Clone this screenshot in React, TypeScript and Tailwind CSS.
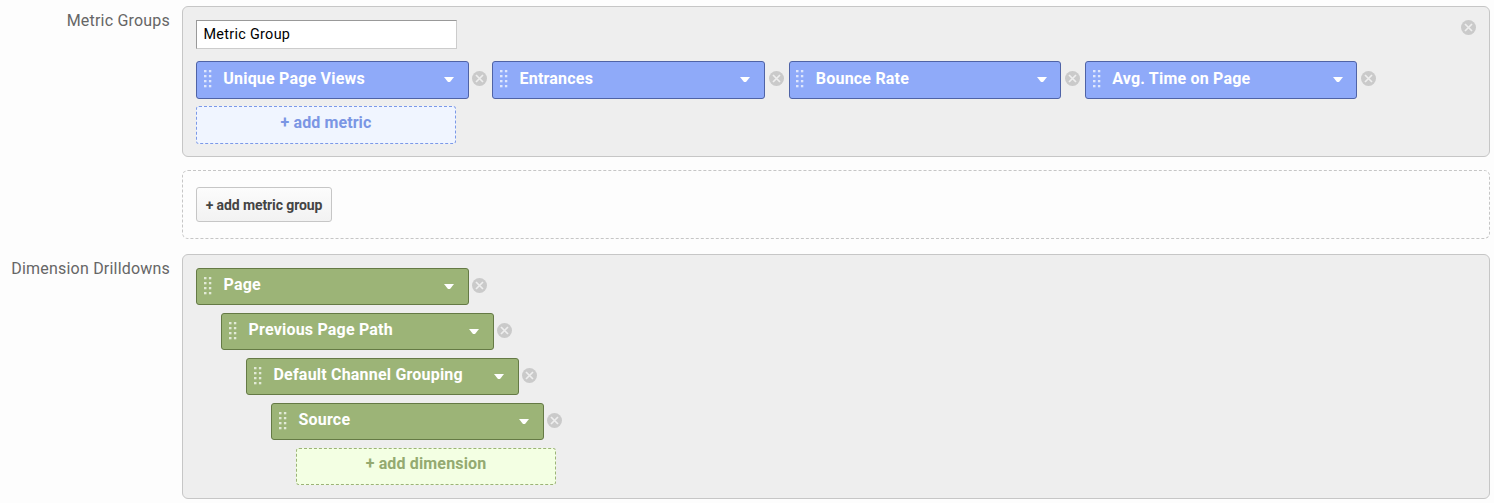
import React from "react";

const METRICS = ["Unique Page Views", "Entrances", "Bounce Rate", "Avg. Time on Page"];

const DIMENSIONS = [
  { name: "Page", indent: "pl-0" },
  { name: "Previous Page Path", indent: "pl-[25px]" },
  { name: "Default Channel Grouping", indent: "pl-[50px]" },
  { name: "Source", indent: "pl-[75px]" },
];

function RemoveIcon() {
  return (
    <svg width="15" height="15" viewBox="0 0 15 15" className="block shrink-0">
      <circle cx="7.5" cy="7.5" r="7.5" fill="#cacaca" />
      <path d="M4 4l7 7M11 4l-7 7" stroke="#eeeeee" strokeWidth="1.7" />
    </svg>
  );
}

function Grip() {
  return (
    <svg width="8" height="18" viewBox="0 0 8 18" className="block shrink-0" fill="#fff" fillOpacity="0.7">
      {[0, 5, 10, 15].map((y) => (
        <g key={y}>
          <rect x="0" y={y} width="2.5" height="2.3" />
          <rect x="4.9" y={y} width="2.4" height="2.3" />
        </g>
      ))}
    </svg>
  );
}

function Chip({ label, kind }: { label: string; kind: "metric" | "dimension" }) {
  const look =
    kind === "metric"
      ? "h-[38px] w-[272.55px] pr-[13.6px] pl-[6.8px] bg-[#8faaf9] border-[#4f63a6]"
      : "h-[37px] w-[273px] pr-[14px] pl-[7px] bg-[#9cb477] border-[#657a45]";
  const gap = kind === "metric" ? "gap-[3.7px]" : "gap-[3px]";
  const textTop = kind === "metric" ? "-mt-px" : "-mt-0.5";
  return (
    <div className={`flex items-start ${gap}`}>
      <button
        type="button"
        className={`flex items-start rounded-[3px] border pt-2 text-left ${look}`}
      >
        <Grip />
        <span className={`ml-[11.5px] flex-1 whitespace-nowrap text-[16px] font-bold leading-[20px] tracking-[0.2px] text-white ${textTop}`}>
          {label}
        </span>
        <svg width="10" height="5" viewBox="0 0 10 5" className="mt-[7px] block shrink-0" fill="#fff">
          <path d="M0 0h10L6 5H4z" />
        </svg>
      </button>
      <button type="button" aria-label="Remove" className="mt-2.5">
        <RemoveIcon />
      </button>
    </div>
  );
}

function Row({ label, children }: { label: string; children: React.ReactNode }) {
  return (
    <div className="flex">
      <div className="w-[182px] shrink-0 pr-3 pt-[5px] text-right text-[16px] leading-5 tracking-[0.2px] text-[#666]">
        {label}
      </div>
      <div className="w-[1308px] shrink-0">{children}</div>
    </div>
  );
}

export default function App() {
  return (
    <div className="h-[503px] w-[1494px] overflow-hidden bg-[#fdfdfd] pt-1.5 font-['Roboto',sans-serif]">
      <Row label="Metric Groups">
        <div className="h-[151px] rounded-[6px] border border-[#c6c6c6] bg-[#eee] px-[13px] pt-[13px]">
          <div className="flex justify-between">
            <input
              defaultValue="Metric Group"
              className="h-[29px] w-[261px] border border-[#ccc] border-l-[#999] border-t-[#999] bg-white pl-[6.5px] text-[14.4px] tracking-[0.3px] text-black outline-none"
            />
            <button type="button" aria-label="Remove group" className="h-[15px]">
              <RemoveIcon />
            </button>
          </div>
          <div className="mt-3 flex gap-[5.05px]">
            {METRICS.map((m) => (
              <Chip key={m} label={m} kind="metric" />
            ))}
          </div>
          <button
            type="button"
            className="mt-[7px] flex h-[38px] w-[260px] justify-center rounded-[3px] border border-dashed border-[#7b99e8] bg-[#f0f5ff] pt-[6px] text-[16px] font-bold leading-[20px] tracking-[0.1px] text-[#7b96e4]"
          >
            + add metric
          </button>
        </div>
        <div className="mt-[13px] h-[69px] rounded-[6px] border border-dashed border-[#c6c6c6] bg-[#fdfdfd] px-[13px] pt-4">
          <button
            type="button"
            className="h-[35px] w-[136px] whitespace-nowrap rounded-[3px] border border-[#c6c6c6] bg-linear-to-b from-[#fcfcfc] to-[#f2f2f2] pt-0.5 text-[14px] font-bold tracking-[-0.1px] text-[#444]"
          >
            + add metric group
          </button>
        </div>
      </Row>
      <div className="h-[15px]" />
      <Row label="Dimension Drilldowns">
        <div className="flex h-[245px] flex-col gap-2 rounded-[6px] border border-[#c6c6c6] bg-[#eee] px-[13px] pt-[13px]">
          {DIMENSIONS.map((d) => (
            <div key={d.name} className={d.indent}>
              <Chip label={d.name} kind="dimension" />
            </div>
          ))}
          <button
            type="button"
            className="ml-[100px] flex h-[37px] w-[260px] justify-center rounded-[3px] border border-dashed border-[#9cb477] bg-[#f3ffe3] pt-[5px] text-[16px] font-bold leading-[20px] tracking-[0.15px] text-[#94aa70]"
          >
            + add dimension
          </button>
        </div>
      </Row>
    </div>
  );
}
